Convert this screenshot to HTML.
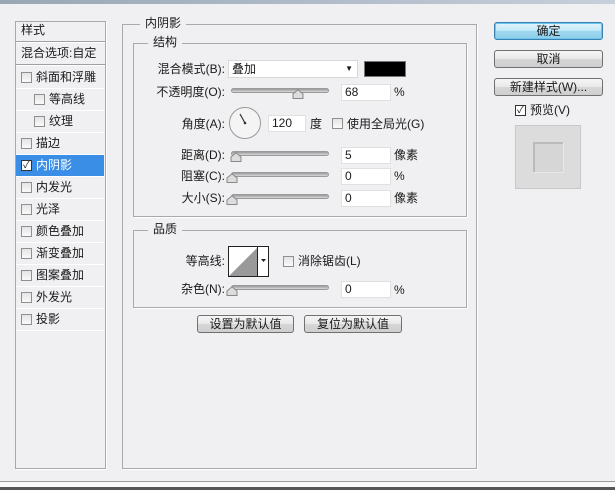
<!DOCTYPE html>
<html><head><meta charset="utf-8"><style>
*{margin:0;padding:0;box-sizing:border-box}
body{width:615px;height:490px;background:#f0eff1;font-family:"Liberation Sans","Noto Sans CJK SC",sans-serif;font-size:12px;color:#1a1a1a;position:relative;overflow:hidden}
.a{position:absolute;white-space:nowrap}
.cb{position:absolute;width:11px;height:11px;border:1px solid #8e8f8f;background:linear-gradient(#e4e4e4,#fafafa)}
.row{position:absolute;left:16px;width:88px;height:22px;border-bottom:1px solid #fff;line-height:21px}
.row .cb{top:5px}
.row span{position:absolute;top:0}
.box{position:absolute;border:1px solid #a9a9a9;box-shadow:1px 1px 0 #fff}
.leg{position:absolute;background:#f0eff1;padding:0 5px;font-size:12px;line-height:14px}
.lbl{position:absolute;text-align:right;width:110px;line-height:16px}
.in{position:absolute;height:17px;background:#fff;border:1px solid #e0e0e0;line-height:15px;padding-left:3px}
.tr{position:absolute;width:98px;height:5px;border-radius:3px;background:linear-gradient(#9a9a9a,#d8d8d8);border:1px solid #9a9a9a}
.th{position:absolute;width:12px;height:10px}
.btn{position:absolute;height:18px;border:1px solid #707070;border-radius:3px;background:linear-gradient(#f5f5f5 0,#e8e8e8 50%,#d6d6d6 51%,#cfcfcf);text-align:center;line-height:16px}
</style></head><body>
<div class="a" style="left:0;top:0;width:615px;height:4px;background:linear-gradient(90deg,#9aa6b4,#c6d0db)"></div>
<div class="a" style="left:0;top:481px;width:615px;height:1px;background:#9a9a9a"></div>
<div class="a" style="left:0;top:482px;width:615px;height:8px;background:#f8f8f8"></div>
<div class="a" style="left:0;top:487px;width:615px;height:3px;background:#555"></div>

<!-- left list -->
<div class="box" style="left:15px;top:21px;width:91px;height:448px"></div>
<div class="a" style="left:21px;top:22px;line-height:16px">样式</div>
<div class="a" style="left:16px;top:41px;width:89px;height:2px;border-top:1px solid #a0a0a0;border-bottom:1px solid #fff"></div>
<div class="a" style="left:21px;top:45px;line-height:16px">混合选项:自定</div>
<div class="a" style="left:16px;top:64px;width:89px;height:2px;border-top:1px solid #a0a0a0;border-bottom:1px solid #fff"></div>
<div class="row" style="top:67px"><div class="cb" style="left:5px"></div><span style="left:20px">斜面和浮雕</span></div>
<div class="row" style="top:89px"><div class="cb" style="left:18px"></div><span style="left:33px">等高线</span></div>
<div class="row" style="top:111px"><div class="cb" style="left:18px"></div><span style="left:33px">纹理</span></div>
<div class="row" style="top:133px"><div class="cb" style="left:5px"></div><span style="left:20px">描边</span></div>
<div class="row" style="top:155px;background:#3a8ee6;color:#fff"><div class="cb" style="left:5px;background:#fff;border-color:#333;font-size:10px;line-height:9px;color:#222;text-align:center">✓</div><span style="left:20px">内阴影</span></div>
<div class="row" style="top:177px"><div class="cb" style="left:5px"></div><span style="left:20px">内发光</span></div>
<div class="row" style="top:199px"><div class="cb" style="left:5px"></div><span style="left:20px">光泽</span></div>
<div class="row" style="top:221px"><div class="cb" style="left:5px"></div><span style="left:20px">颜色叠加</span></div>
<div class="row" style="top:243px"><div class="cb" style="left:5px"></div><span style="left:20px">渐变叠加</span></div>
<div class="row" style="top:265px"><div class="cb" style="left:5px"></div><span style="left:20px">图案叠加</span></div>
<div class="row" style="top:287px"><div class="cb" style="left:5px"></div><span style="left:20px">外发光</span></div>
<div class="row" style="top:309px"><div class="cb" style="left:5px"></div><span style="left:20px">投影</span></div>

<!-- fieldsets -->
<div class="box" style="left:122px;top:24px;width:355px;height:445px"></div>
<div class="leg" style="left:140px;top:16px">内阴影</div>
<div class="box" style="left:133px;top:43px;width:334px;height:174px"></div>
<div class="leg" style="left:148px;top:35px">结构</div>
<div class="box" style="left:133px;top:230px;width:334px;height:78px"></div>
<div class="leg" style="left:148px;top:222px">品质</div>

<div class="lbl" style="left:115px;top:61px">混合模式(B):</div>
<div class="in" style="left:228px;top:60px;width:130px;height:18px;border-color:#d8d8d8;line-height:16px">叠加<span style="position:absolute;right:4px;top:0;font-size:8px">▼</span></div>
<div class="a" style="left:364px;top:61px;width:42px;height:16px;background:#000;border:1px solid #777"></div>

<div class="lbl" style="left:115px;top:84px">不透明度(O):</div>
<div class="tr" style="left:231px;top:88px"></div>
<svg class="th" style="left:292px;top:89px" viewBox="0 0 12 10"><path d="M1 9.5V5L6 .8 11 5v4.5z" fill="#ddd" stroke="#888"/></svg>
<div class="in" style="left:341px;top:84px;width:50px">68</div>
<div class="a" style="left:394px;top:85px">%</div>

<div class="lbl" style="left:115px;top:116px">角度(A):</div>
<svg class="a" style="left:228px;top:106px" width="34" height="34" viewBox="0 0 34 34"><circle cx="17" cy="17" r="15.5" fill="#f4f4f4" stroke="#999"/><line x1="17" y1="17" x2="12" y2="8" stroke="#333" stroke-width="1.2"/><circle cx="17" cy="17" r="1.3" fill="#333"/></svg>
<div class="in" style="left:268px;top:115px;width:38px">120</div>
<div class="a" style="left:310px;top:116px;line-height:16px">度</div>
<div class="cb" style="left:332px;top:118px"></div>
<div class="a" style="left:347px;top:116px;line-height:16px">使用全局光(G)</div>

<div class="lbl" style="left:115px;top:147px">距离(D):</div>
<div class="tr" style="left:231px;top:151px"></div>
<svg class="th" style="left:230px;top:152px" viewBox="0 0 12 10"><path d="M1 9.5V5L6 .8 11 5v4.5z" fill="#ddd" stroke="#888"/></svg>
<div class="in" style="left:341px;top:147px;width:50px">5</div>
<div class="a" style="left:394px;top:147px;line-height:16px">像素</div>

<div class="lbl" style="left:115px;top:168px">阻塞(C):</div>
<div class="tr" style="left:231px;top:172px"></div>
<svg class="th" style="left:226px;top:173px" viewBox="0 0 12 10"><path d="M1 9.5V5L6 .8 11 5v4.5z" fill="#ddd" stroke="#888"/></svg>
<div class="in" style="left:341px;top:168px;width:50px">0</div>
<div class="a" style="left:394px;top:168px;line-height:16px">%</div>

<div class="lbl" style="left:115px;top:190px">大小(S):</div>
<div class="tr" style="left:231px;top:194px"></div>
<svg class="th" style="left:226px;top:195px" viewBox="0 0 12 10"><path d="M1 9.5V5L6 .8 11 5v4.5z" fill="#ddd" stroke="#888"/></svg>
<div class="in" style="left:341px;top:190px;width:50px">0</div>
<div class="a" style="left:394px;top:190px;line-height:16px">像素</div>

<div class="lbl" style="left:115px;top:253px">等高线:</div>
<svg class="a" style="left:228px;top:246px" width="41" height="31" viewBox="0 0 41 31"><rect x=".5" y=".5" width="40" height="30" fill="#fff" stroke="#222"/><path d="M1 30L29 2V30z" fill="#999"/><line x1="29.5" y1="1" x2="29.5" y2="30" stroke="#222"/><path d="M33 13h5l-2.5 3z" fill="#222"/></svg>
<div class="cb" style="left:283px;top:256px"></div>
<div class="a" style="left:298px;top:253px;line-height:16px">消除锯齿(L)</div>

<div class="lbl" style="left:115px;top:281px">杂色(N):</div>
<div class="tr" style="left:231px;top:285px"></div>
<svg class="th" style="left:226px;top:286px" viewBox="0 0 12 10"><path d="M1 9.5V5L6 .8 11 5v4.5z" fill="#ddd" stroke="#888"/></svg>
<div class="in" style="left:341px;top:281px;width:50px">0</div>
<div class="a" style="left:394px;top:282px;line-height:16px">%</div>

<div class="btn" style="left:197px;top:315px;width:97px">设置为默认值</div>
<div class="btn" style="left:304px;top:315px;width:98px">复位为默认值</div>

<!-- right -->
<div class="btn" style="left:494px;top:22px;width:109px;border-color:#3c7fb1;background:linear-gradient(#e6f6fd 0,#bfe7f7 50%,#9fd8f0 51%,#8ccde8);box-shadow:0 0 0 1px #6ac8ee inset">确定</div>
<div class="btn" style="left:494px;top:50px;width:109px">取消</div>
<div class="btn" style="left:494px;top:78px;width:109px">新建样式(W)...</div>
<div class="cb" style="left:515px;top:105px;background:#fff;border-color:#333;font-size:10px;line-height:9px;text-align:center">✓</div>
<div class="a" style="left:530px;top:102px;line-height:16px">预览(V)</div>
<div class="a" style="left:515px;top:125px;width:66px;height:64px;background:#dcdcdc;border:1px solid #c8c8c8"></div>
<div class="a" style="left:533px;top:142px;width:30px;height:30px;background:#d6d6d6;border-top:2px solid #bbb;border-left:2px solid #bbb;box-shadow:1px 1px 0 #e8e8e8"></div>
</body></html>
